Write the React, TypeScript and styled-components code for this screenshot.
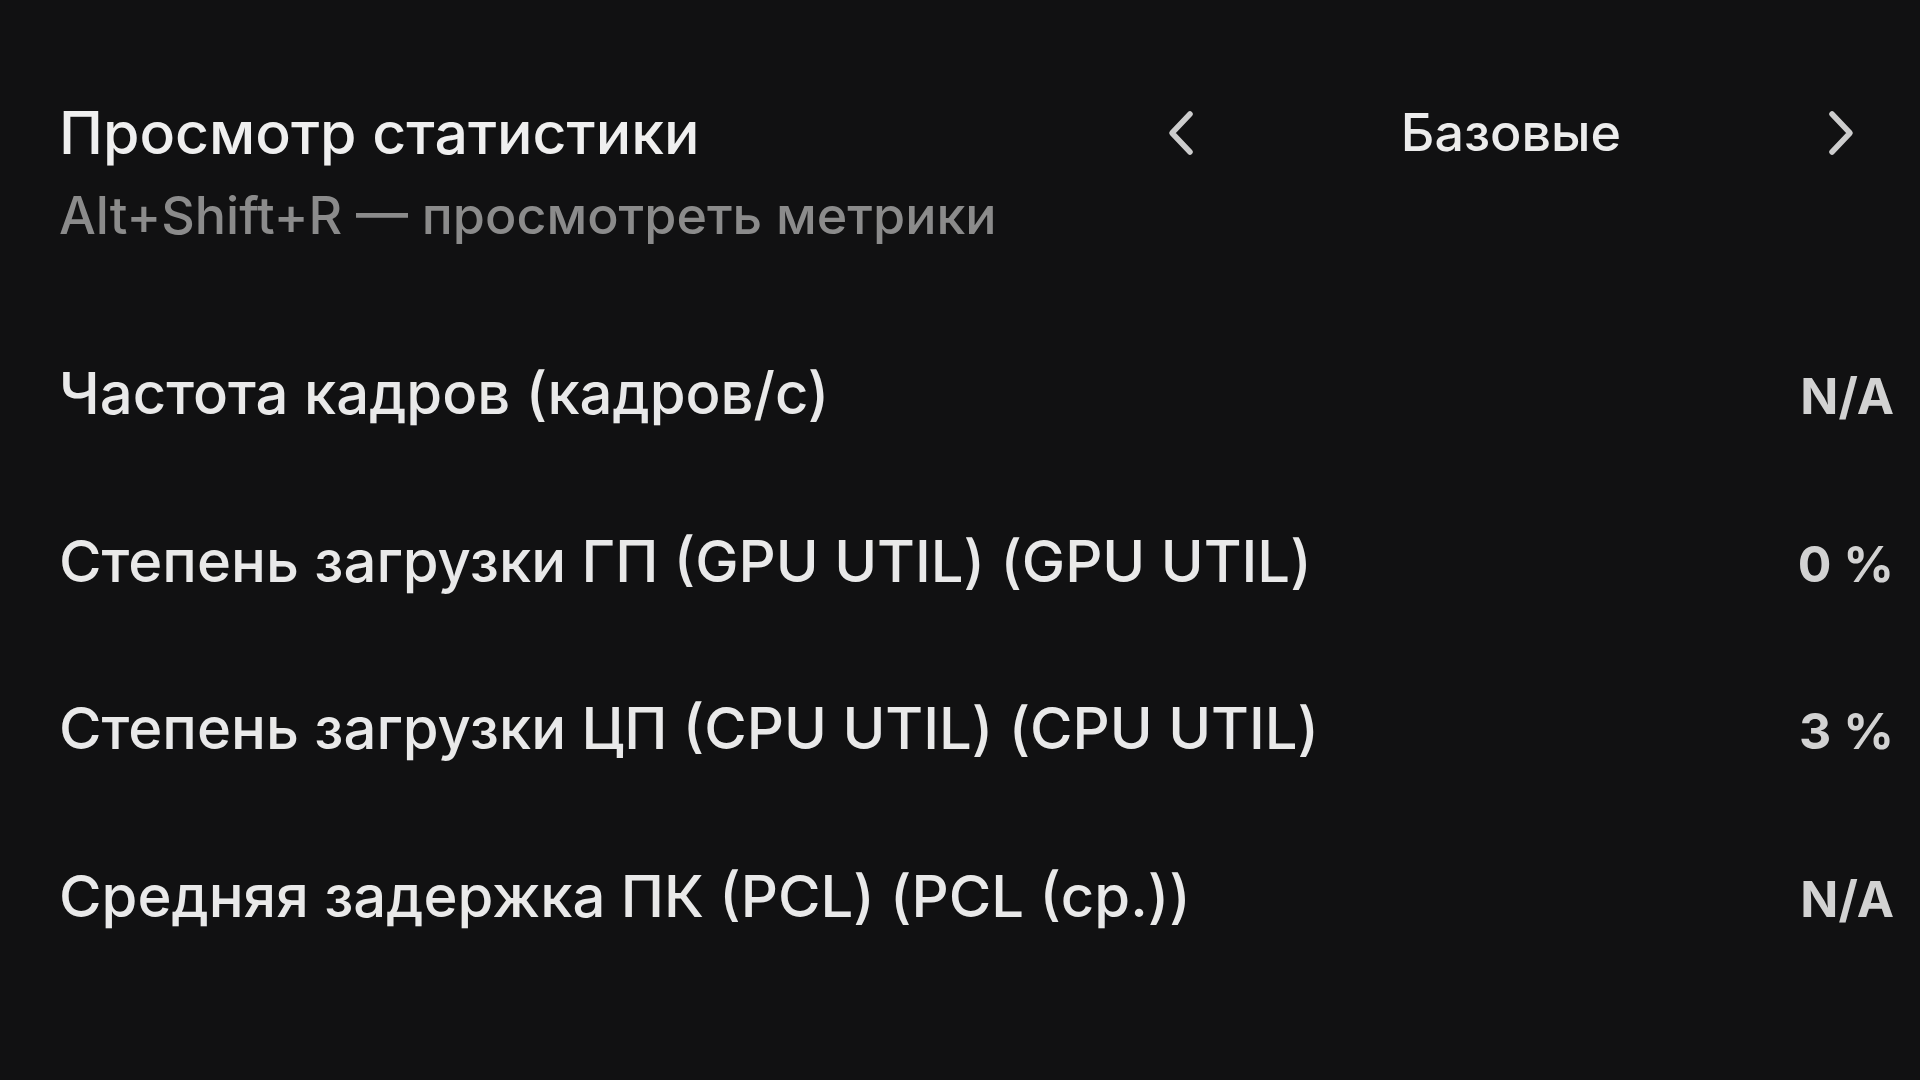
import React from 'react';
import styled, { createGlobalStyle } from 'styled-components';

const GlobalStyle = createGlobalStyle`
  html, body {
    margin: 0;
    padding: 0;
    background: #111112;
  }
  body {
    font-family: Inter, Roboto, "Noto Sans", sans-serif;
    -webkit-font-smoothing: antialiased;
  }
`;

const Page = styled.div`
  box-sizing: border-box;
  width: 1920px;
  height: 1080px;
  overflow: hidden;
  padding: 99px 26px 0 59px;
  background: #111112;
`;

const Header = styled.div`
  display: flex;
  justify-content: space-between;
  align-items: flex-start;
  padding-right: 38px;
`;

const TitleBlock = styled.div`
  display: flex;
  flex-direction: column;
`;

const Title = styled.h1`
  margin: 0;
  font-size: 59px;
  line-height: 68px;
  font-weight: 500;
  color: #efefef;
`;

const Hint = styled.div`
  margin-top: 19px;
  font-size: 52px;
  line-height: 60px;
  font-weight: 500;
  color: #8b8b8b;
`;

const Selector = styled.div`
  display: flex;
  justify-content: space-between;
  align-items: center;
  width: 690px;
  height: 68px;
`;

const Preset = styled.span`
  font-size: 52px;
  line-height: 68px;
  font-weight: 500;
  color: #ececec;
`;

const Arrow = styled.button`
  display: flex;
  padding: 0;
  border: 0;
  background: none;
  color: #cdcdcd;
  cursor: pointer;
`;

const MetricList = styled.div`
  margin-top: 64px;
  display: flex;
  flex-direction: column;
`;

const Metric = styled.div`
  display: flex;
  justify-content: space-between;
  align-items: baseline;
  height: 167.5px;
  line-height: 167.5px;
`;

const MetricName = styled.span`
  font-size: 58px;
  font-weight: 500;
  color: #e9e9e9;
`;

const MetricValue = styled.span`
  font-size: 50px;
  font-weight: 700;
  color: #d2d2d2;
`;

function Chevron({ flip }: { flip?: boolean }) {
  return (
    <svg width="30" height="46" viewBox="0 0 30 46" fill="none">
      <path
        d={flip ? 'M6 4 L24 23 L6 42' : 'M24 4 L6 23 L24 42'}
        stroke="currentColor"
        strokeWidth="5.5"
        strokeLinecap="round"
        strokeLinejoin="round"
      />
    </svg>
  );
}

const metrics = [
  { name: 'Частота кадров (кадров/с)', value: 'N/A' },
  { name: 'Степень загрузки ГП (GPU UTIL) (GPU UTIL)', value: '0 %' },
  { name: 'Степень загрузки ЦП (CPU UTIL) (CPU UTIL)', value: '3 %' },
  { name: 'Средняя задержка ПК (PCL) (PCL (ср.))', value: 'N/A' },
];

export default function App() {
  return (
    <>
      <GlobalStyle />
      <Page>
        <Header>
          <TitleBlock>
            <Title>Просмотр статистики</Title>
            <Hint>Alt+Shift+R — просмотреть метрики</Hint>
          </TitleBlock>
          <Selector>
            <Arrow aria-label="Предыдущий">
              <Chevron />
            </Arrow>
            <Preset>Базовые</Preset>
            <Arrow aria-label="Следующий">
              <Chevron flip />
            </Arrow>
          </Selector>
        </Header>
        <MetricList>
          {metrics.map((m) => (
            <Metric key={m.name}>
              <MetricName>{m.name}</MetricName>
              <MetricValue>{m.value}</MetricValue>
            </Metric>
          ))}
        </MetricList>
      </Page>
    </>
  );
}
